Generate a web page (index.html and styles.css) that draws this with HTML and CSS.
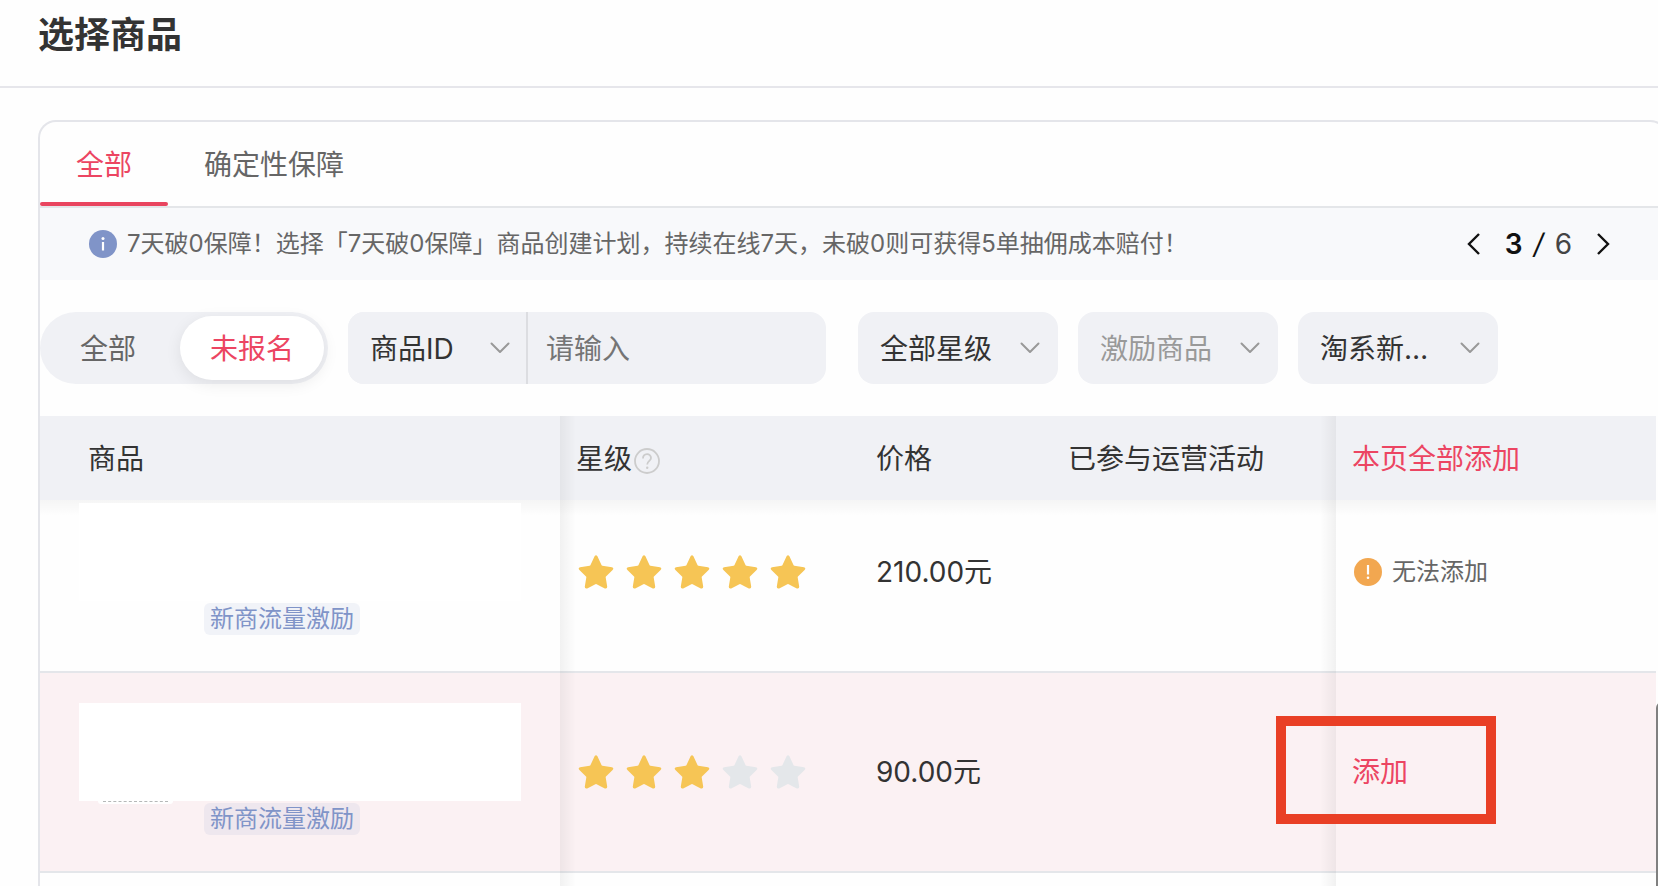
FILE: index.html
```html
<!DOCTYPE html>
<html lang="zh-CN">
<head>
<meta charset="utf-8">
<title>选择商品</title>
<link rel="stylesheet" href="styles.css">
</head>
<body>
<svg class="defs" aria-hidden="true">
  <symbol id="star" viewBox="0 0 36 36"><path d="M16.700 2.100Q18 .4 19.300 2.100L23.600 11.200Q23.800 11.600 24.400 11.800L33.900 13.200Q36.300 13.900 34.600 15.900L28 22.400Q27.600 22.800 27.700 23.400L29.200 32.600Q29.300 35.200 26.800 34.400L18.600 30.200Q18 29.900 17.400 30.200L9.200 34.400Q6.700 35.200 6.800 32.600L8.300 23.400Q8.400 22.800 8 22.400L1.400 15.900Q-.3 13.900 2.100 13.200L11.600 11.800Q12.200 11.600 12.400 11.200Z" fill="currentColor"/></symbol>
  <symbol id="chevron" viewBox="0 0 20 12"><path d="M1.500 1.500L10 10L18.500 1.500" fill="none" stroke="currentColor" stroke-width="2" stroke-linecap="round" stroke-linejoin="round"/></symbol>
</svg>
<header class="page-header"><h1>选择商品</h1></header>
<main class="card">
  <nav class="tabs">
    <button class="tab tab-active">全部</button>
    <button class="tab">确定性保障</button>
  </nav>
  <section class="notice">
    <svg class="notice-icon" viewBox="0 0 28 28"><circle cx="14" cy="14" r="14" fill="#8094c8"/><circle cx="14" cy="8.500" r="1.500" fill="#fff"/><path d="M14 12V20.500" stroke="#fff" stroke-width="2.200"/></svg>
    <p>7天破0保障！选择「7天破0保障」商品创建计划，持续在线7天，未破0则可获得5单抽佣成本赔付！</p>
    <div class="pager">
      <button aria-label="上一条"><svg viewBox="0 0 14 24"><path d="M12 2L2 12L12 22" fill="none" stroke="#111" stroke-width="2.400"/></svg></button>
      <span class="count"><b>3</b><i>/</i><span>6</span></span>
      <button aria-label="下一条"><svg viewBox="0 0 14 24"><path d="M2 2L12 12L2 22" fill="none" stroke="#111" stroke-width="2.400"/></svg></button>
    </div>
  </section>
  <form class="filters">
    <div class="segment">
      <button type="button">全部</button>
      <button type="button" class="segment-on">未报名</button>
    </div>
    <div class="search">
      <div class="select search-type"><select aria-label="搜索类型"><option>商品ID</option></select><svg><use href="#chevron"/></svg></div>
      <input type="text" aria-label="搜索内容" placeholder="请输入">
    </div>
    <div class="selects">
      <div class="select"><select aria-label="星级"><option>全部星级</option></select><svg><use href="#chevron"/></svg></div>
      <div class="select select-muted"><select aria-label="激励商品"><option>激励商品</option></select><svg><use href="#chevron"/></svg></div>
      <div class="select"><select aria-label="淘系新商"><option>淘系新…</option></select><svg><use href="#chevron"/></svg></div>
    </div>
  </form>
  <div class="table-area">
    <table>
      <colgroup><col class="col-product"><col class="col-stars"><col class="col-price"><col class="col-activity"><col class="col-action"></colgroup>
      <thead>
        <tr>
          <th class="product">商品</th>
          <th class="stars-cell"><span class="with-help">星级<svg class="help" viewBox="0 0 26 26"><circle cx="13" cy="13" r="12" fill="none" stroke="#ccc" stroke-width="1.800"/><path d="M9 10.500C9 4.800 17 4.800 17 10C17 12.800 13.200 13 13.200 16.500" fill="none" stroke="#ccc" stroke-width="1.800"/><circle cx="13.200" cy="19.800" r="1.200" fill="#ccc"/></svg></span></th>
          <th>价格</th>
          <th class="activity">已参与运营活动</th>
          <th><button class="link">本页全部添加</button></th>
        </tr>
      </thead>
      <tbody>
        <tr class="row-first">
          <td class="product"><div class="cover"></div><span class="tag">新商流量激励</span></td>
          <td class="stars-cell"><div class="stars" role="img" aria-label="5星"><svg><use href="#star"/></svg><svg><use href="#star"/></svg><svg><use href="#star"/></svg><svg><use href="#star"/></svg><svg><use href="#star"/></svg></div></td>
          <td>210.00元</td>
          <td class="activity"></td>
          <td><span class="blocked"><svg viewBox="0 0 28 28"><circle cx="14" cy="14" r="14" fill="#f2a750"/><path d="M14 7V16.500" stroke="#fff" stroke-width="2.200"/><circle cx="14" cy="19.800" r="1.300" fill="#fff"/></svg>无法添加</span></td>
        </tr>
        <tr class="row-hover">
          <td class="product"><div class="cover"><span class="cover-edge"></span></div><span class="tag">新商流量激励</span></td>
          <td class="stars-cell"><div class="stars" role="img" aria-label="3星"><svg><use href="#star"/></svg><svg><use href="#star"/></svg><svg><use href="#star"/></svg><svg class="off"><use href="#star"/></svg><svg class="off"><use href="#star"/></svg></div></td>
          <td>90.00元</td>
          <td class="activity"></td>
          <td><button class="link">添加</button><div class="highlight"></div></td>
        </tr>
        <tr class="row-next"><td class="product"></td><td class="stars-cell"></td><td></td><td class="activity"></td><td></td></tr>
      </tbody>
    </table>
    <div class="scroll-thumb"></div>
  </div>
</main>
</body>
</html>
```
FILE: styles.css
```css
* { box-sizing: border-box; }
body {
  display: flex;
  flex-direction: column;
  margin: 0;
  height: 100vh;
  overflow: hidden;
  background: #fefefe;
  color: #333;
  font: 28px/36px Inter, "Noto Sans CJK SC", sans-serif;
}
button, select, input {
  margin: 0;
  padding: 0;
  border: 0;
  background: none;
  color: inherit;
  font: inherit;
}
.defs { position: absolute; width: 0; height: 0; }
.page-header {
  flex: none;
  height: 88px;
  padding: 9px 38px 0;
  border-bottom: 2px solid #e6e6eb;
}
h1 { margin: 0; font-size: 36px; line-height: 52px; font-weight: 700; }
.card {
  flex: 1;
  min-height: 0;
  overflow: hidden;
  margin: 32px -10px 0 38px;
  border: 2px solid #e4e5ea;
  border-bottom: 0;
  border-radius: 18px 18px 0 0;
}
.tabs { display: flex; height: 86px; border-bottom: 2px solid #e4e6e9; }
.tab { position: relative; padding: 2px 36px 0; color: #666; }
.tab-active, .segment .segment-on, .link { color: #ec4562; }
.tab-active::after {
  content: "";
  position: absolute;
  left: 0;
  right: 0;
  bottom: 0;
  height: 4px;
  border-radius: 2px;
  background: #e9455f;
}
.notice {
  display: flex;
  align-items: center;
  height: 72px;
  padding: 0 56px 0 49px;
  background: #f8f9fb;
  color: #666;
  font-size: 24px;
}
.notice p { margin: 0 auto 0 10px; white-space: nowrap; }
.notice-icon { width: 28px; height: 28px; }
.pager { display: flex; align-items: center; gap: 24px; font-size: 28px; }
.pager button { display: flex; }
.pager svg { width: 14px; height: 24px; }
.count { display: flex; gap: 11px; color: #444; }
.count b { font-weight: 600; color: #111; }
.count i { font-style: italic; color: #111; }
.filters { display: flex; height: 136px; padding: 32px 0; }
.segment {
  display: flex;
  padding: 4px;
  border-radius: 36px;
  background: #f0f1f5;
  color: #666;
}
.segment button { padding: 2px 44px 0 36px; border-radius: 32px; }
.segment .segment-on {
  padding: 2px 30px 0;
  background: #fff;
  box-shadow: 0 4px 16px rgba(0, 0, 0, .08);
}
.search {
  display: flex;
  width: 478px;
  margin: 0 32px 0 20px;
  border-radius: 16px;
  background: #f0f1f5;
}
.search input { flex: 1; min-width: 0; padding: 2px 0 0 18px; outline: 0; }
.search input::placeholder { color: #757575; opacity: 1; }
.selects { display: flex; gap: 20px; }
.select { position: relative; width: 200px; border-radius: 16px; background: #f0f1f5; }
.search .search-type {
  width: 180px;
  border-right: 2px solid #dcdde1;
  border-radius: 16px 0 0 16px;
}
.select select { appearance: none; width: 100%; height: 100%; padding: 2px 50px 0 22px; outline: 0; }
.select-muted { color: #999; }
.select svg {
  position: absolute;
  top: 30px;
  right: 18px;
  width: 20px;
  height: 12px;
  color: #999;
  pointer-events: none;
}
.search .search-type svg { right: 16px; }
.table-area { position: relative; margin-right: 10px; }
table { width: 100%; border-collapse: separate; border-spacing: 0; table-layout: fixed; }
.col-product { width: 520px; }
.col-stars { width: 300px; }
.col-price { width: 192px; }
.col-activity { width: 284px; }
th {
  position: relative;
  height: 84px;
  padding: 2px 16px 0;
  background: #f0f1f5;
  font-weight: 400;
  text-align: left;
  white-space: nowrap;
}
.row-first td { background: linear-gradient(rgba(0, 0, 0, .035), transparent 16px); }
th.product { padding-left: 48px; }
.with-help { display: flex; align-items: center; gap: 2px; }
.help { width: 26px; height: 26px; margin-top: 4px; }
td {
  position: relative;
  height: 200px;
  padding: 0 16px 81px;
  border-bottom: 2px solid #e4e6ea;
  vertical-align: bottom;
}
.row-first td { height: 173px; }
.row-hover td { background: #fbf1f3; }
td.product { padding: 0 39px 36px; }
.stars-cell::before, .activity::after {
  content: "";
  position: absolute;
  top: 0;
  bottom: -2px;
  width: 16px;
}
th.stars-cell::before, th.activity::after { bottom: 0; }
.stars-cell::before { left: 0; background: linear-gradient(to right, rgba(0, 0, 0, .05), transparent); }
.activity::after { right: 0; background: linear-gradient(to left, rgba(0, 0, 0, .05), transparent); }
.cover { position: relative; height: 98px; margin-bottom: 2px; background: #fff; }
.cover-edge {
  position: absolute;
  left: 19px;
  top: 98px;
  width: 75px;
  height: 3px;
  border-radius: 0 0 8px 8px;
  background: #fff;
}
.cover-edge::after { content: ""; display: block; margin: 0 5px; border-top: 1px dashed #b5b8b8; }
.tag {
  display: block;
  width: max-content;
  margin-left: 125px;
  padding: 0 6px;
  border-radius: 6px;
  background: rgba(128, 148, 200, .1);
  color: #8094c8;
  font-size: 24px;
  line-height: 32px;
}
.stars { display: flex; gap: 12px; padding-left: 2px; color: #f6c555; }
.stars svg { width: 36px; height: 36px; }
.stars .off { color: #e4e7ea; }
.blocked { display: flex; align-items: center; gap: 10px; padding-left: 2px; color: #666; font-size: 24px; }
.blocked svg { width: 28px; height: 28px; }
.link { display: block; }
.highlight {
  position: absolute;
  z-index: 2;
  left: -60px;
  top: 43px;
  width: 220px;
  height: 108px;
  border: 10px solid #e93f25;
  pointer-events: none;
}
.scroll-thumb {
  position: absolute;
  left: 100%;
  top: 286px;
  bottom: 0;
  width: 12px;
  border-radius: 6px;
  background: #808080;
}
```
